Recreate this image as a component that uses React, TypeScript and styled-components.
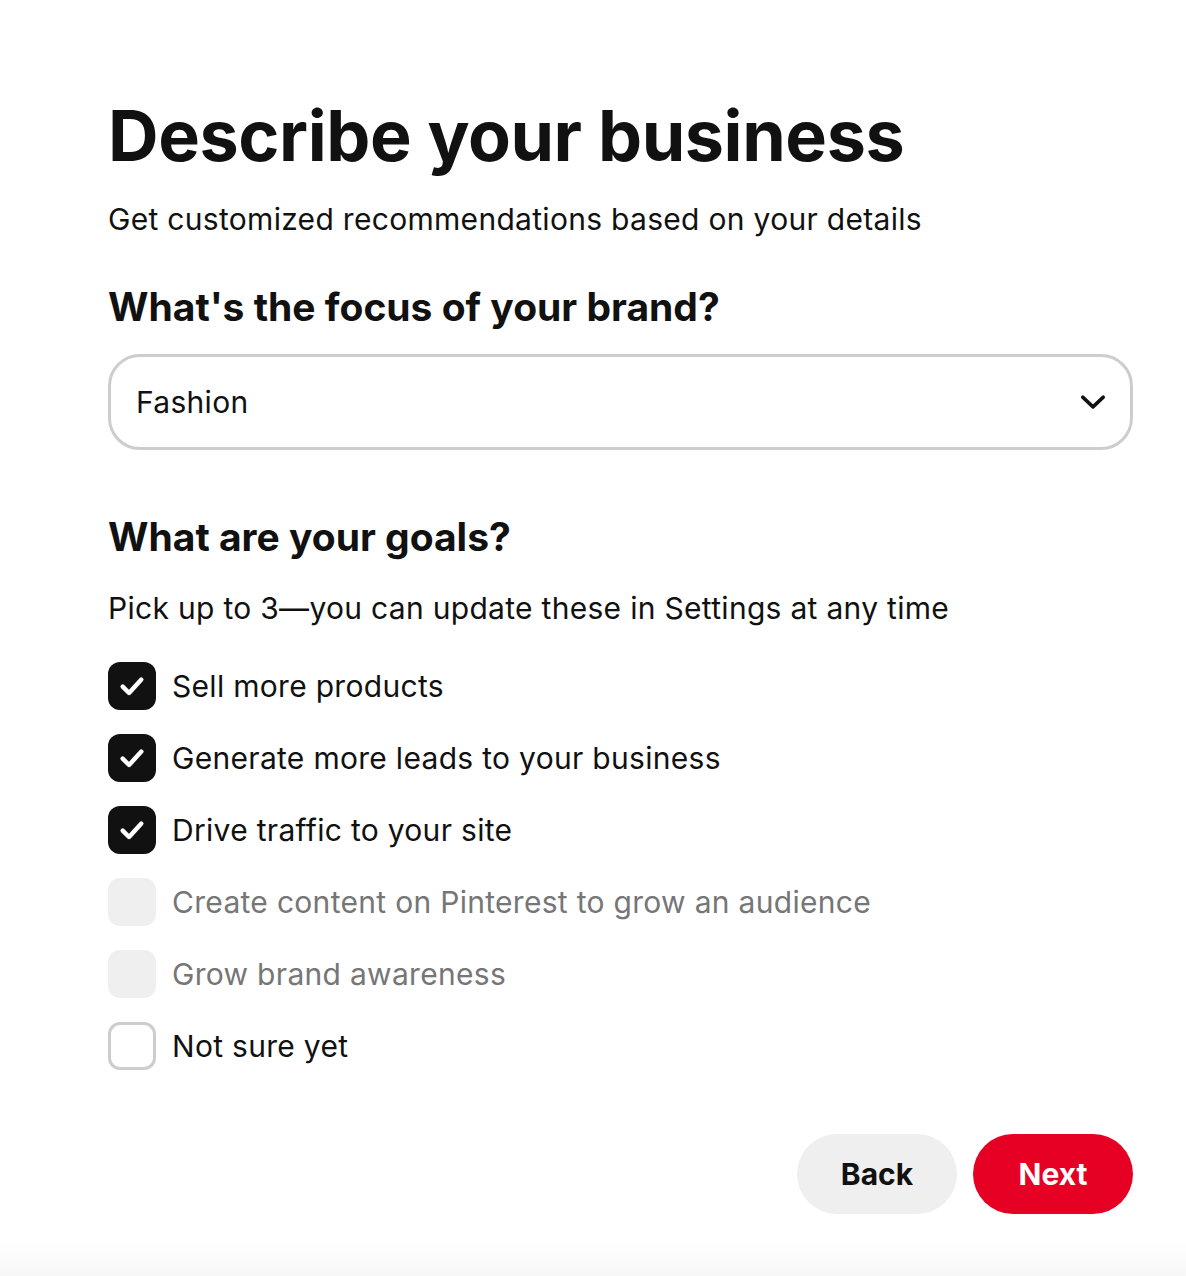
import * as React from "react"
import styled, { createGlobalStyle } from "styled-components"

const GlobalStyle = createGlobalStyle`
  html, body {
    margin: 0;
    padding: 0;
    background: #ffffff;
  }
  body {
    font-family: Inter, "Noto Sans", "Liberation Sans", sans-serif;
    color: #111111;
    -webkit-font-smoothing: antialiased;
  }
`

const Page = styled.div`
  display: flex;
  flex-direction: column;
  min-height: 100vh;
`

const Content = styled.main`
  flex: 1;
  display: flex;
  flex-direction: column;
  padding: 96px 53px 0 108px;
`

const Title = styled.h1`
  margin: 0;
  font-size: 70px;
  line-height: 80px;
  font-weight: 700;
  letter-spacing: -0.4px;
`

const Subtitle = styled.p`
  margin: 25px 0 0;
  font-size: 30px;
  line-height: 36px;
  font-weight: 400;
  letter-spacing: 0.3px;
`

interface SectionProps {
  gap: number
}
const SectionTitle = styled.h2`
  margin: ${(p: SectionProps) => p.gap}px 0 0;
  font-size: 39px;
  line-height: 48px;
  font-weight: 700;
`

const Select = styled.button`
  display: flex;
  align-items: center;
  justify-content: space-between;
  box-sizing: border-box;
  width: 100%;
  height: 96px;
  margin-top: 23px;
  padding: 0 24px 0 25px;
  border: 3px solid #cdcdcd;
  border-radius: 32px;
  background: #ffffff;
  font-family: inherit;
  font-size: 30px;
  letter-spacing: 0.3px;
  color: #111111;
  cursor: pointer;
`

const Hint = styled.p`
  margin: 29px 0 0;
  font-size: 30px;
  line-height: 36px;
  letter-spacing: 0.3px;
`

const Goals = styled.ul`
  display: flex;
  flex-direction: column;
  gap: 24px;
  margin: 36px 0 0;
  padding: 0;
  list-style: none;
`

type BoxState = "checked" | "disabled" | "empty"

const Goal = styled.li`
  display: flex;
  align-items: center;
  gap: 16px;
  height: 48px;
  font-size: 30px;
  letter-spacing: 0.3px;
  color: ${(p: { state: BoxState }) => (p.state === "disabled" ? "#767676" : "#111111")};
`

const Box = styled.span`
  display: flex;
  align-items: center;
  justify-content: center;
  box-sizing: border-box;
  width: 48px;
  height: 48px;
  flex-shrink: 0;
  border-radius: 12px;
  background: ${(p: { state: BoxState }) =>
    p.state === "checked" ? "#111111" : p.state === "disabled" ? "#efefef" : "#ffffff"};
  border: ${(p: { state: BoxState }) => (p.state === "empty" ? "3px solid #cdcdcd" : "none")};
`

const Actions = styled.div`
  display: flex;
  justify-content: flex-end;
  gap: 16px;
  margin-top: 64px;
`

const Button = styled.button`
  width: 160px;
  height: 80px;
  border: none;
  border-radius: 40px;
  font-family: inherit;
  font-size: 30px;
  font-weight: 700;
  cursor: pointer;
  background: ${(p: { primary?: boolean }) => (p.primary ? "#e60023" : "#efefef")};
  color: ${(p: { primary?: boolean }) => (p.primary ? "#ffffff" : "#111111")};
`

const Footer = styled.footer`
  height: 36px;
  margin-top: auto;
  background: linear-gradient(to bottom, #ffffff, #f7f7f7);
`

const Chevron = () => (
  <svg width="26" height="26" viewBox="0 0 24 24" fill="none">
    <path d="M2.5 7.5 L12 16.5 L21.5 7.5" stroke="#111111" strokeWidth="3.2" strokeLinecap="round" strokeLinejoin="round" />
  </svg>
)

const Check = () => (
  <svg width="28" height="28" viewBox="0 0 24 24" fill="none">
    <path d="M4 12.5 L9.5 18 L20 6.5" stroke="#ffffff" strokeWidth="3.8" strokeLinecap="round" strokeLinejoin="round" />
  </svg>
)

const goals: { label: string; state: BoxState }[] = [
  { label: "Sell more products", state: "checked" },
  { label: "Generate more leads to your business", state: "checked" },
  { label: "Drive traffic to your site", state: "checked" },
  { label: "Create content on Pinterest to grow an audience", state: "disabled" },
  { label: "Grow brand awareness", state: "disabled" },
  { label: "Not sure yet", state: "empty" },
]

const App = () => {
  return (
    <>
      <GlobalStyle />
      <Page>
        <Content>
          <Title>Describe your business</Title>
          <Subtitle>Get customized recommendations based on your details</Subtitle>

          <SectionTitle gap={46}>What's the focus of your brand?</SectionTitle>
          <Select>
            <span>Fashion</span>
            <Chevron />
          </Select>

          <SectionTitle gap={63}>What are your goals?</SectionTitle>
          <Hint>Pick up to 3—you can update these in Settings at any time</Hint>
          <Goals>
            {goals.map((g) => (
              <Goal key={g.label} state={g.state}>
                <Box state={g.state}>{g.state === "checked" && <Check />}</Box>
                {g.label}
              </Goal>
            ))}
          </Goals>

          <Actions>
            <Button>Back</Button>
            <Button primary>Next</Button>
          </Actions>
        </Content>
        <Footer />
      </Page>
    </>
  )
}

export default App
